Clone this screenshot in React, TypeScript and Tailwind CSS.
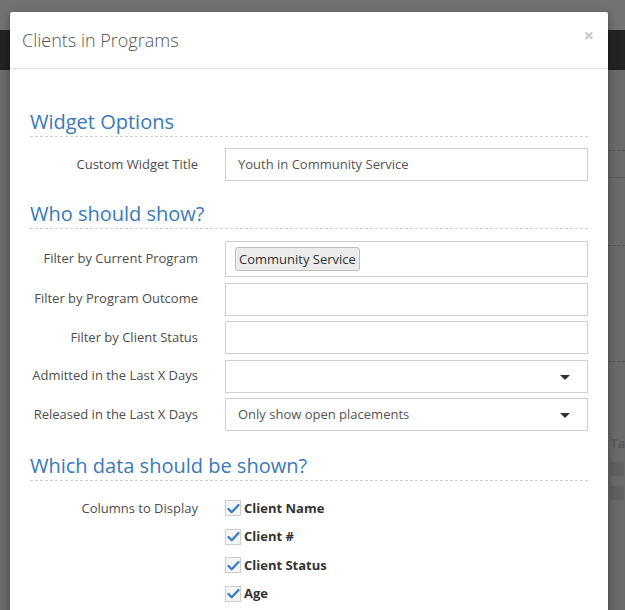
import React from "react";

const font = { fontFamily: '"Open Sans", "Noto Sans", sans-serif' };

function SectionTitle({ children }: { children: React.ReactNode }) {
  return (
    <h2 className="border-b border-dashed border-[#cfcfcf] pb-[1px] text-[20px] leading-[26px] text-[#3a79b9]">
      {children}
    </h2>
  );
}

function Row({ label, children }: { label: string; children: React.ReactNode }) {
  return (
    <div className="flex items-center">
      <label className="w-[168px] shrink-0 text-right text-[13px] text-[#4d4d4d]">{label}</label>
      <div className="ml-[27px] flex-1">{children}</div>
    </div>
  );
}

function Caret() {
  return (
    <svg width="10" height="6" viewBox="0 0 10 6" className="absolute right-[17px] top-[14px]">
      <path d="M0 0h10L5 5z" fill="#333" />
    </svg>
  );
}

function Check({ label }: { label: string }) {
  return (
    <div className="flex h-[28.5px] items-center">
      <span className="flex h-[16px] w-[16px] items-center justify-center border border-[#cdcdcd] bg-[#f5f5f5]">
        <svg width="13" height="11" viewBox="0 0 13 11">
          <path d="M1.5 6l3.2 3.2 6.8-7.2" fill="none" stroke="#3a7bc8" strokeWidth="2.3" strokeLinecap="round" strokeLinejoin="round" />
        </svg>
      </span>
      <span className="ml-[3px] text-[13px] font-bold text-[#333]">{label}</span>
    </div>
  );
}

export default function App() {
  const input = "h-[33px] border border-[#cfcfcf] bg-white";
  return (
    <div className="relative h-[610px] w-[625px] overflow-hidden bg-[#6d6d6d]" style={font}>
      {/* page behind the overlay */}
      <div className="flex flex-col">
        <div className="h-[30px] bg-[#727272]" />
        <div className="h-[40px] bg-[#232323]" />
        <div className="flex flex-1 justify-end">
          <div className="flex h-[540px] w-[17px] flex-col bg-[#6a6a6a]">
            <div className="mt-[80px] border-t border-dashed border-[#555]" />
            <div className="mt-[26px] h-px bg-[#5c5c5c]" />
            <div className="mt-[67px] border-t border-dashed border-[#555]" />
            <div className="mt-[115px] border-t border-dashed border-[#555]" />
            <div className="mt-[75px] pl-[2px] text-[13px] font-bold leading-none text-[#5a5a5a]">Ta</div>
            <div className="mt-[12px] ml-[2px] h-[14px] w-[14px] bg-[#616161]" />
            <div className="mt-[10px] ml-[2px] h-[14px] w-[14px] bg-[#616161]" />
          </div>
        </div>
      </div>

      {/* modal */}
      <div className="absolute left-[10px] top-[12px] h-[640px] w-[598px] rounded-[2px] bg-white shadow-[0_3px_9px_rgba(0,0,0,0.4)]">
        <div className="flex h-[57px] items-center justify-between border-b border-[#e3e6e8] pl-[12px] pr-[14px]">
          <h1 className="text-[18px] font-light text-[#555]">Clients in Programs</h1>
          <span className="-mt-[10px] text-[18px] font-bold leading-none text-[#c8c8c8]">×</span>
        </div>

        <div className="px-[20px] pt-[40px]">
          <SectionTitle>Widget Options</SectionTitle>
          <div className="mt-[11px]">
            <Row label="Custom Widget Title">
              <div className={`${input} flex items-center px-[12px] text-[13px] text-[#555]`}>
                Youth in Community Service
              </div>
            </Row>
          </div>

          <div className="mt-[20px]">
            <SectionTitle>Who should show?</SectionTitle>
          </div>
          <div className="mt-[12px] flex flex-col gap-[5.5px]">
            <Row label="Filter by Current Program">
              <div className="flex h-[36px] items-center border border-[#cfcfcf] bg-white px-[9px]">
                <span className="rounded-[3px] border border-[#bdbdbd] bg-[#ececec] px-[3px] py-[2px] text-[13px] leading-[18px] text-[#333]">
                  Community Service
                </span>
              </div>
            </Row>
            <Row label="Filter by Program Outcome">
              <div className={input} />
            </Row>
            <Row label="Filter by Client Status">
              <div className={input} />
            </Row>
            <Row label="Admitted in the Last X Days">
              <div className={`${input} relative`}>
                <Caret />
              </div>
            </Row>
            <Row label="Released in the Last X Days">
              <div className={`${input} relative flex items-center px-[12px] text-[13px] text-[#555]`}>
                Only show open placements
                <Caret />
              </div>
            </Row>
          </div>

          <div className="mt-[22px]">
            <SectionTitle>Which data should be shown?</SectionTitle>
          </div>
          <div className="mt-[13px] flex items-start">
            <label className="w-[168px] shrink-0 pt-[5px] text-right text-[13px] text-[#4d4d4d]">Columns to Display</label>
            <div className="ml-[27px] flex flex-col">
              <Check label="Client Name" />
              <Check label="Client #" />
              <Check label="Client Status" />
              <Check label="Age" />
            </div>
          </div>
        </div>
      </div>
    </div>
  );
}
